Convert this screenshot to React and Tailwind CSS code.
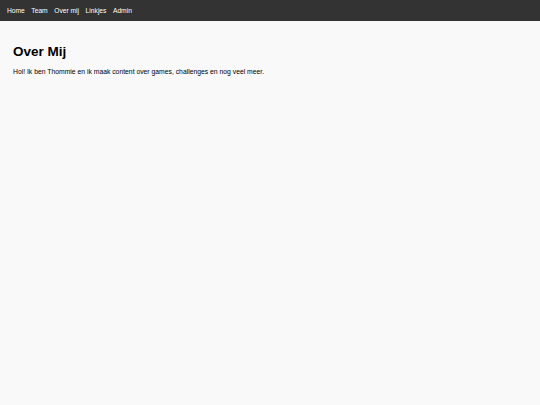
export default function App() {
  const links = ["Home", "Team", "Over mij", "Linkjes", "Admin"];
  return (
    <div className="min-h-screen bg-[#f9f9f9] font-['Liberation_Sans',Arial,sans-serif] text-black">
      <nav className="flex h-[21px] items-center gap-[6.5px] bg-[#333333] px-[7px] pt-[1px]">
        {links.map((l) => (
          <a key={l} href="#" className="text-[6.7px] leading-none text-white">
            {l}
          </a>
        ))}
      </nav>
      <main className="px-[13px] pt-[24px]">
        <h1 className="text-[13.5px] font-bold leading-none">Over Mij</h1>
        <p className="mt-[10px] text-[6.8px] leading-none">
          Hoi! Ik ben Thommie en ik maak content over games, challenges en nog veel meer.
        </p>
      </main>
    </div>
  );
}
